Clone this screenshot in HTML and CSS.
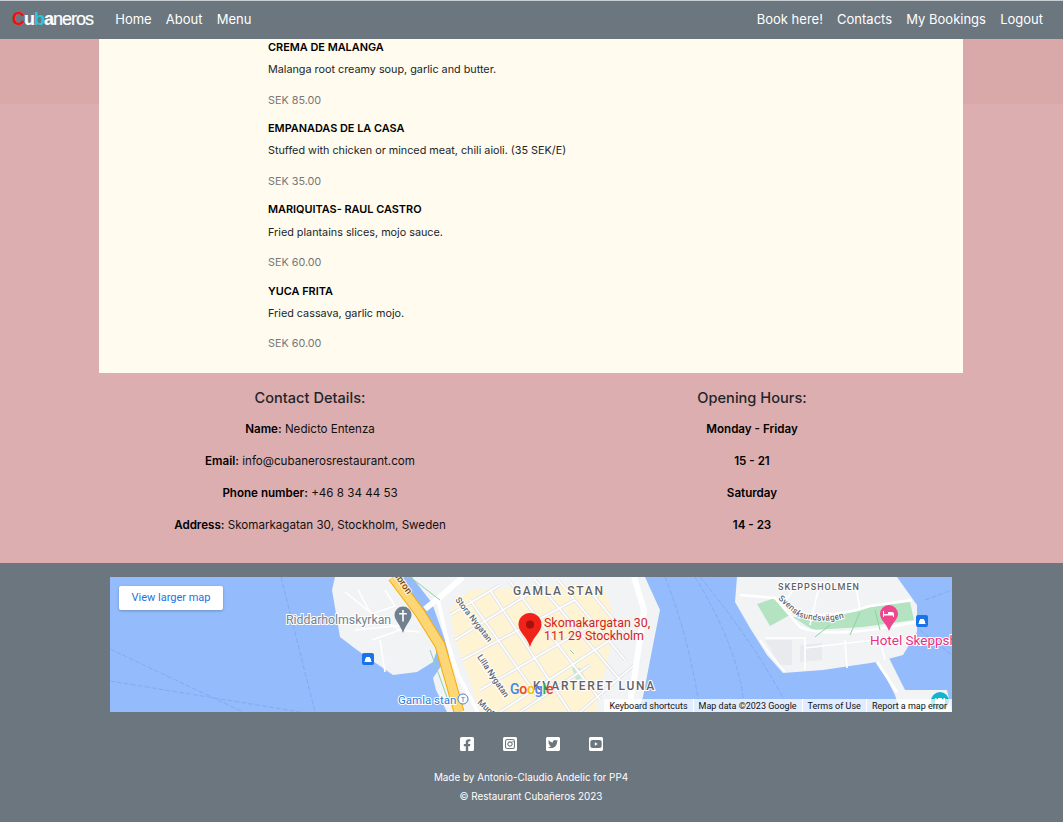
FILE: index.html
```html
<!DOCTYPE html>
<html lang="en">
<head>
<meta charset="utf-8">
<title>Restaurant Cubañeros</title>
<link rel="stylesheet" href="styles.css">
</head>
<body>
<nav class="nav">
  <div class="nav-left">
    <a class="logo" href="#"><span class="c">C</span><span class="u">u</span><span class="b">b</span><span class="a">a</span>neros</a>
    <a class="nav-link" href="#">Home</a>
    <a class="nav-link" href="#">About</a>
    <a class="nav-link" href="#">Menu</a>
  </div>
  <div class="nav-right">
    <a class="nav-link" href="#">Book here!</a>
    <a class="nav-link" href="#">Contacts</a>
    <a class="nav-link" href="#">My Bookings</a>
    <a class="nav-link" href="#">Logout</a>
  </div>
</nav>
<main class="main">
  <section class="menu">
    <article class="item">
      <h3>CREMA DE MALANGA</h3>
      <p class="desc">Malanga root creamy soup, garlic and butter.</p>
      <p class="price">SEK 85.00</p>
    </article>
    <article class="item">
      <h3>EMPANADAS DE LA CASA</h3>
      <p class="desc">Stuffed with chicken or minced meat, chili aioli. (35 SEK/E)</p>
      <p class="price">SEK 35.00</p>
    </article>
    <article class="item">
      <h3>MARIQUITAS- RAUL CASTRO</h3>
      <p class="desc">Fried plantains slices, mojo sauce.</p>
      <p class="price">SEK 60.00</p>
    </article>
    <article class="item">
      <h3>YUCA FRITA</h3>
      <p class="desc">Fried cassava, garlic mojo.</p>
      <p class="price">SEK 60.00</p>
    </article>
  </section>
  <section class="info">
    <div class="info-col">
      <h2>Contact Details:</h2>
      <p><b>Name:</b> Nedicto Entenza</p>
      <p><b>Email:</b> info@cubanerosrestaurant.com</p>
      <p><b>Phone number:</b> +46 8 34 44 53</p>
      <p><b>Address:</b> Skomarkagatan 30, Stockholm, Sweden</p>
    </div>
    <div class="info-col">
      <h2>Opening Hours:</h2>
      <p><b>Monday - Friday</b></p>
      <p><b>15 - 21</b></p>
      <p><b>Saturday</b></p>
      <p><b>14 - 23</b></p>
    </div>
  </section>
</main>
<footer class="footer">
  <div class="map">
    <svg class="map-svg" viewBox="110 577 842 135" width="842" height="135" aria-label="Map of Gamla Stan, Stockholm">
      <defs>
        <path id="streets" d="M450 615L500 585M455 640L535 590M462 660L575 600M480 690L600 620M500 712L610 640M470 600L540 700M490 590L570 712M510 582L600 700M535 580L620 680M558 580L625 660M585 585L630 640M580 712L640 660M520 712L590 665"/>
        <path id="svensk" d="M778 599L797 616Q825 626 853 615"/>
      </defs>
      <rect x="110" y="577" width="842" height="135" fill="#94bcfd"/>
      <g fill="none" stroke="#7fabf7" stroke-width="1" stroke-dasharray="5 2">
        <path d="M281 577L315 712M110 649L243 712M110 681L300 712"/>
        <path d="M665 577Q690 640 700 712M695 577Q740 650 745 712M700 577Q760 650 790 712"/>
        <path d="M920 630L952 655M925 600L952 590"/>
      </g>
      <path fill="#f1f3f4" d="M335 577L332 590L340 637L357 650L393 675L417 672L433 662L437 650L425 620L405 590L400 577Z"/>
      <path fill="#f1f3f4" d="M412 577L645 577L660 610L652 650L643 697L638 712L447 712L436 690L433 678L445 660L440 640L430 610Z"/>
      <path fill="#f1f3f4" d="M737 577L735 602L750 628L767 655L783 673L823 670L877 662L903 655L917 632L917 605L897 577Z"/>
      <path fill="#f1f3f4" d="M876 658L888 656L905 690L947 690L952 712L900 712L895 695Z"/>
      <path fill="#94bcfd" d="M403 577L412 577L432 603L445 640L449 656L442 655L435 630L420 600Z"/>
      <path fill="#fef4d3" d="M470 590L585 585L605 590L612 612L610 650L600 690L596 712L480 712L470 680L455 640L450 610Z"/>
      <path fill="#e8eaed" d="M765 640L792 640L792 665L780 665ZM800 645L822 643L822 660L800 662Z"/>
      <path fill="#b4e3c1" d="M757 604L775 598L790 615L770 626ZM793 617L813 619L850 612L870 607L910 602L914 620L863 627L813 630Z"/>
      <path fill="#c4e8cf" d="M572 668L580 668L585 678L576 680Z"/>
      <use href="#streets" fill="none" stroke="#e3e5e8" stroke-width="3.500"/>
      <use href="#streets" fill="none" stroke="#fff" stroke-width="1.500"/>
      <g fill="none" stroke="#fff" stroke-width="1.600">
        <path stroke-width="2.500" d="M740 595L775 598L800 627Q830 640 916 622M790 612Q830 620 870 606L912 600"/>
        <path d="M760 640L770 654L785 672M765 638L805 638L805 670M805 648L900 637M845 640L847 668M880 640L885 660M786 600L800 580M820 582L810 625M855 580L860 610"/>
        <path d="M345 592L370 612L400 630M358 590L370 612M385 590L395 606L374 613M372 640L400 630L420 632M355 630L405 625M380 640L385 672"/>
      </g>
      <g fill="none" stroke="#fff">
        <path stroke-width="6" d="M634 577L644 610L634 680L628 712"/>
        <path stroke-width="6" d="M463 577L440 597L425 609"/>
        <path stroke-width="4" d="M438 600L447 640L458 675L478 712"/>
        <path stroke-width="3" d="M877 662L897 692"/>
      </g>
      <path fill="none" stroke="#f9ab00" stroke-width="11" d="M393 577L420 613L440 645L450 680L459 712"/>
      <path fill="none" stroke="#fdd776" stroke-width="9" d="M393 577L420 613L440 645L450 680L459 712"/>
      <path fill="none" stroke="#8ed3a4" stroke-width="1" d="M410 577L440 600M430 650L448 700M570 650L574 654M815 637L830 625M850 635L860 612M880 630L875 610"/>

      <text class="m-road m-brown" transform="translate(395 577) rotate(55)">lbron</text>
      <text class="m-road" transform="translate(455 600) rotate(52)">Stora Nygatan</text>
      <text class="m-road" transform="translate(477 657) rotate(56)">Lilla Nygatan</text>
      <text class="m-road" transform="translate(477 703) rotate(42)">Munt</text>
      <text class="m-road"><textPath href="#svensk">Svensksundsvägen</textPath></text>

      <text class="m-area" x="513" y="595">GAMLA STAN</text>
      <text class="m-area" x="533" y="690">KVARTERET LUNA</text>
      <text class="m-area m-small" x="778" y="590">SKEPPSHOLMEN</text>
      <text class="m-poi" x="286" y="624">Riddarholmskyrkan</text>
      <text class="m-transit" x="398" y="704">Gamla stan</text>
      <text class="m-hotel" x="870" y="645">Hotel Skeppsholmen</text>
      <text class="m-pin" x="544" y="627">Skomakargatan 30,</text>
      <text class="m-pin" x="544" y="640">111 29 Stockholm</text>

      <path fill="#70808e" d="M403 607a8.500 8.500 0 0 0-8.500 8.500c0 5 5 8 8.500 18c3.500-10 8.500-13 8.500-18a8.500 8.500 0 0 0-8.500-8.500z" transform="translate(0 -.5)"/>
      <path fill="#fff" d="M402.200 610h1.600v3h3v1.500h-3v7h-1.600v-7h-3V613h3z"/>
      <circle cx="463" cy="699" r="5" fill="#fff" stroke="#4285d6"/>
      <text x="463" y="702" font-size="8" text-anchor="middle" class="m-t">T</text>
      <g>
        <rect x="362" y="653" width="12" height="12" rx="2" fill="#1a73e8"/>
        <path fill="#fff" d="M364 662l1-1v-2.500h1V657h4v1.500h1v2.500l1 1z"/>
        <rect x="916" y="615" width="12" height="12" rx="2" fill="#1a73e8"/>
        <path fill="#fff" d="M918 624l1-1v-2.500h1V619h4v1.500h1v2.500l1 1z"/>
      </g>
      <path fill="#f0468f" d="M889 605a9 9 0 0 0-9 9c0 5.500 6 9 9 17c3-8 9-11.500 9-17a9 9 0 0 0-9-9z"/>
      <path fill="#fff" d="M883 617v-6h1v3h4v-2h4a2 2 0 0 1 2 2v3h-1v-1.500h-9V617z"/>
      <circle cx="940" cy="701" r="9" fill="#12b5cb"/>
      <path fill="#fff" d="M935 704v-6h1.500v1.500h1.500V698h4v1.500h1.500V698h1.500v6z"/>
      <path fill="#f0221a" d="M530 613a11.500 11.500 0 0 0-11.500 11.500c0 8 8 11 11.500 22.500c3.500-11.500 11.500-14.500 11.500-22.500A11.500 11.500 0 0 0 530 613z"/>
      <circle cx="530" cy="624.500" r="4" fill="#a3120d"/>
      <text class="m-goog" x="510" y="694"><tspan fill="#4285f4">G</tspan><tspan fill="#ea4335">o</tspan><tspan fill="#fbbc05">o</tspan><tspan fill="#4285f4">g</tspan><tspan fill="#34a853">l</tspan><tspan fill="#ea4335">e</tspan></text>
    </svg>
    <a class="map-btn" href="#">View larger map</a>
    <div class="map-attr">
      <span class="plain">Keyboard shortcuts</span>
      <span>Map data ©2023 Google</span>
      <span>Terms of Use</span>
      <span>Report a map error</span>
    </div>
  </div>
  <div class="social">
    <svg viewBox="0 0 448 512" class="ico"><path d="M400 32H48A48 48 0 0 0 0 80v352a48 48 0 0 0 48 48h137.250V327.690h-63V256h63v-54.640c0-62.150 37-96.480 93.670-96.480 27.140 0 55.520 4.840 55.520 4.840v61h-31.270c-30.810 0-40.420 19.120-40.420 38.730V256h68.780l-11 71.690h-57.780V480H400a48 48 0 0 0 48-48V80a48 48 0 0 0-48-48z"/></svg>
    <svg viewBox="0 0 448 512" class="ico"><path fill-rule="evenodd" d="M48 32h352a48 48 0 0 1 48 48v352a48 48 0 0 1-48 48H48a48 48 0 0 1-48-48V80a48 48 0 0 1 48-48zM140 96a76 76 0 0 0-76 76v168a76 76 0 0 0 76 76h168a76 76 0 0 0 76-76V172a76 76 0 0 0-76-76zM140 130h168a42 42 0 0 1 42 42v168a42 42 0 0 1-42 42H140a42 42 0 0 1-42-42V172a42 42 0 0 1 42-42zM224 170a86 86 0 1 0 .01 0zM224 204a52 52 0 1 1-.01 0zM320 160a20 20 0 1 0 .01 0z"/></svg>
    <svg viewBox="0 0 448 512" class="ico"><path d="M400 32H48C21.500 32 0 53.500 0 80v352c0 26.500 21.500 48 48 48h352c26.500 0 48-21.500 48-48V80c0-26.500-21.500-48-48-48zm-48.900 158.800c.2 2.800.2 5.700.2 8.500 0 86.700-66 186.600-186.600 186.600-37.200 0-71.700-10.800-100.700-29.400 5.300.6 10.400.8 15.800.8 30.700 0 58.900-10.400 81.400-28-28.800-.6-53-19.500-61.300-45.500 10.100 1.500 19.200 1.500 29.600-1.200-30-6.100-52.500-32.500-52.500-64.400v-.8c8.700 4.900 18.900 7.900 29.600 8.300a65.447 65.447 0 0 1-29.200-54.600c0-12.200 3.200-23.400 8.900-33.100 32.300 39.800 80.800 65.800 135.200 68.600-9.300-44.500 24-80.600 64-80.600 18.900 0 35.900 7.900 47.900 20.700 14.800-2.800 29-8.300 41.600-15.800-4.900 15.200-15.100 28-28.600 36 13.100-1.400 25.800-5.100 37.600-10.200-8.900 13.100-20.100 24.700-32.900 34z"/></svg>
    <svg viewBox="0 0 448 512" class="ico"><path d="M186.800 202.100l95.200 54.100-95.200 54.100V202.100zM448 80v352c0 26.500-21.500 48-48 48H48c-26.500 0-48-21.500-48-48V80c0-26.500 21.500-48 48-48h352c26.500 0 48 21.500 48 48zm-42 176.300s0-59.600-7.600-88.200c-4.200-15.800-16.500-28.200-32.200-32.400C337.900 128 224 128 224 128s-113.900 0-142.200 7.700c-15.700 4.200-28 16.600-32.200 32.400-7.600 28.500-7.600 88.200-7.600 88.200s0 59.600 7.600 88.200c4.200 15.800 16.500 27.700 32.200 31.900C110.100 384 224 384 224 384s113.900 0 142.200-7.700c15.700-4.200 28-16.100 32.200-31.900 7.600-28.500 7.600-88.100 7.600-88.100z"/></svg>
  </div>
  <p class="credit">Made by Antonio-Claudio Andelic for PP4</p>
  <p class="credit">© Restaurant Cubañeros 2023</p>
</footer>
</body>
</html>
```
FILE: styles.css
```css
* { box-sizing: border-box; }
html, body { margin: 0; padding: 0; }
body {
  font-family: Inter, "Liberation Sans", sans-serif;
  font-size: 11.6px;
  line-height: 16px;
  color: #212529;
  background: #dcaeb0;
  border-top: 1px solid #c9ced3;
  overflow: hidden;
}
a { text-decoration: none; }

.nav {
  height: 38px;
  background: #6b767f;
  display: flex;
  justify-content: space-between;
  align-items: center;
  padding: 0 20px 2px 12px;
}
.nav-left, .nav-right { display: flex; align-items: center; gap: 14.200px; }
.nav-link { color: #fff; font-size: 13px; }
.logo {
  font-family: "Liberation Sans", Arial, sans-serif;
  font-size: 18px;
  letter-spacing: -1px;
  color: #fff;
  margin-right: 8px;
  -webkit-text-stroke: .2px #fff;
}
.logo .c { color: #ff0a0a; font-weight: 700; -webkit-text-stroke: 0; }
.logo .u { font-weight: 700; }
.logo .b { color: #2ec4d8; font-weight: 700; -webkit-text-stroke: 0; }
.logo .a { font-weight: 700; }

.main {
  background: linear-gradient(#d9a9a9 65px, #dcaeb0 65px);
}
.menu {
  width: 864px;
  margin: 0 0 0 99px;
  height: 334px;
  background: #fffbee;
  padding: 0 0 0 169px;
}
.item { height: 81.200px; }
.item h3 {
  margin: 0;
  height: 23.200px;
  line-height: 16px;
  font-size: 10.900px;
  font-weight: 600;
  color: #000;
}
.desc { margin: 0; height: 30.400px; line-height: 16px; font-size: 10.800px; color: #212529; }
.price { margin: 0; height: 27.600px; line-height: 16px; font-size: 10.800px; color: #777; }

.info {
  height: 190px;
  display: grid;
  grid-template-columns: 442px 442px;
  justify-content: start;
  padding: 14.500px 0 0 89px;
  text-align: center;
}
.info-col h2 {
  margin: 0 0 13.500px;
  font-size: 14.600px;
  line-height: 20px;
  font-weight: 500;
}
.info-col p { margin: 0 0 16px; color: #111; }
.info-col b { font-weight: 600; color: #000; }

.footer {
  height: 259px;
  background: #6b767f;
  padding-top: 14px;
  color: #fff;
  text-align: center;
}
.map {
  position: relative;
  width: 842px;
  height: 135px;
  margin: 0 0 0 110px;
  overflow: hidden;
  font-family: Roboto, sans-serif;
}
.map-svg { display: block; }
.map-btn {
  position: absolute;
  left: 9px;
  top: 9px;
  width: 104px;
  height: 24px;
  background: #fff;
  color: #1a73e8;
  font-size: 11px;
  line-height: 24px;
  border-radius: 2px;
  box-shadow: 0 1px 3px rgba(0,0,0,.25);
}
.map-attr {
  position: absolute;
  right: 0;
  bottom: 0;
  height: 13px;
  display: flex;
  font-size: 9px;
  line-height: 14px;
  color: #111;
  white-space: nowrap;
}
.map-attr span { padding: 0 5px; background: rgba(255,255,255,.72); border-left: 1px solid #fff; }
.map-attr span.plain { border-left: 0; }
.map-svg text { font-family: Roboto, sans-serif; }
.m-road { font-size: 8.500px; fill: #5f6368; font-weight: 500; paint-order: stroke; stroke: #fff; stroke-width: 2px; }
.m-brown { fill: #7a4a10; font-size: 9.500px; stroke: #fff3c9; }
.m-area { font-size: 12px; font-weight: 500; letter-spacing: 1.700px; fill: #5f6368; paint-order: stroke; stroke: #fff; stroke-width: 2px; }
.m-small { font-size: 9px; letter-spacing: 1px; }
.m-poi { font-size: 12.300px; fill: #70808e; paint-order: stroke; stroke: #fff; stroke-width: 2px; }
.m-transit { font-size: 11.500px; fill: #2a7bdc; paint-order: stroke; stroke: #fff; stroke-width: 2px; }
.m-t { fill: #4285d6; }
.m-hotel { font-size: 13.500px; fill: #e8307f; paint-order: stroke; stroke: #fff; stroke-width: 2px; }
.m-pin { font-size: 12.400px; fill: #d51f1f; }
.m-goog { font-size: 14px; font-weight: 500; letter-spacing: -.2px; }

.social {
  display: flex;
  justify-content: center;
  gap: 29px;
  margin: 24px 1px 0 0;
  height: 16px;
}
.ico { width: 14px; height: 16px; fill: #fff; display: block; }
.credit {
  margin: 0;
  font-size: 9.900px;
  line-height: 19px;
  color: #fff;
  padding-right: 1px;
}
.social + .credit { margin-top: 16px; }
```
